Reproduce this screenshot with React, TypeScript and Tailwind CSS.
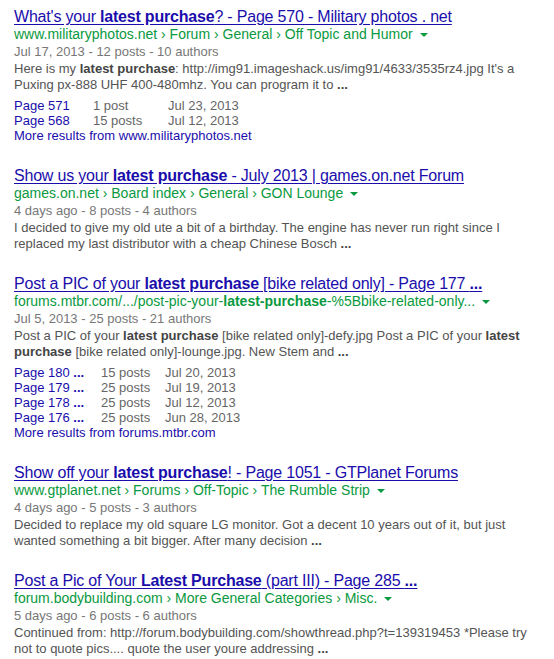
import React from 'react';

type Part = string | { b: string };
type Sitelink = { page: Part[]; posts: string; date: string };

interface Result {
  title: Part[];
  url: Part[];
  meta: string;
  snippet: Part[][];
  sitelinks?: { cols: string; rows: Sitelink[]; more: string };
}

const results: Result[] = [
  {
    title: ["What's your ", { b: 'latest purchase' }, '? - Page 570 - Military photos . net'],
    url: ['www.militaryphotos.net › Forum › General › Off Topic and Humor'],
    meta: 'Jul 17, 2013 - 12 posts - 10 authors',
    snippet: [
      ['Here is my ', { b: 'latest purchase' }, ": http://img91.imageshack.us/img91/4633/3535rz4.jpg It's a"],
      ['Puxing px-888 UHF 400-480mhz. You can program it to ', { b: '...' }],
    ],
    sitelinks: {
      cols: 'grid-cols-[79px_75px_auto]',
      rows: [
        { page: ['Page 571'], posts: '1 post', date: 'Jul 23, 2013' },
        { page: ['Page 568'], posts: '15 posts', date: 'Jul 12, 2013' },
      ],
      more: 'More results from www.militaryphotos.net',
    },
  },
  {
    title: ['Show us your ', { b: 'latest purchase' }, ' - July 2013 | games.on.net Forum'],
    url: ['games.on.net › Board index › General › GON Lounge'],
    meta: '4 days ago - 8 posts - 4 authors',
    snippet: [
      ['I decided to give my old ute a bit of a birthday. The engine has never run right since I'],
      ['replaced my last distributor with a cheap Chinese Bosch ', { b: '...' }],
    ],
  },
  {
    title: ['Post a PIC of your ', { b: 'latest purchase' }, ' [bike related only] - Page 177 ', { b: '...' }],
    url: ['forums.mtbr.com/.../post-pic-your-', { b: 'latest-purchase' }, '-%5Bbike-related-only...'],
    meta: 'Jul 5, 2013 - 25 posts - 21 authors',
    snippet: [
      ['Post a PIC of your ', { b: 'latest purchase' }, ' [bike related only]-defy.jpg Post a PIC of your ', { b: 'latest' }],
      [{ b: 'purchase' }, ' [bike related only]-lounge.jpg. New Stem and ', { b: '...' }],
    ],
    sitelinks: {
      cols: 'grid-cols-[87px_64px_auto]',
      rows: [
        { page: ['Page 180 ', { b: '...' }], posts: '15 posts', date: 'Jul 20, 2013' },
        { page: ['Page 179 ', { b: '...' }], posts: '25 posts', date: 'Jul 19, 2013' },
        { page: ['Page 178 ', { b: '...' }], posts: '25 posts', date: 'Jul 12, 2013' },
        { page: ['Page 176 ', { b: '...' }], posts: '25 posts', date: 'Jun 28, 2013' },
      ],
      more: 'More results from forums.mtbr.com',
    },
  },
  {
    title: ['Show off your ', { b: 'latest purchase' }, '! - Page 1051 - GTPlanet Forums'],
    url: ['www.gtplanet.net › Forums › Off-Topic › The Rumble Strip'],
    meta: '4 days ago - 5 posts - 3 authors',
    snippet: [
      ['Decided to replace my old square LG monitor. Got a decent 10 years out of it, but just'],
      ['wanted something a bit bigger. After many decision ', { b: '...' }],
    ],
  },
  {
    title: ['Post a Pic of Your ', { b: 'Latest Purchase' }, ' (part III) - Page 285 ', { b: '...' }],
    url: ['forum.bodybuilding.com › More General Categories › Misc.'],
    meta: '5 days ago - 6 posts - 6 authors',
    snippet: [
      ['Continued from: http://forum.bodybuilding.com/showthread.php?t=139319453 *Please try'],
      ['not to quote pics.... quote the user youre addressing ', { b: '...' }],
    ],
  },
];

function Text({ parts, boldClass = '' }: { parts: Part[]; boldClass?: string }) {
  return (
    <>
      {parts.map((p, i) =>
        typeof p === 'string' ? <span key={i}>{p}</span> : <b key={i} className={`font-bold ${boldClass}`}>{p.b}</b>
      )}
    </>
  );
}

function ResultItem({ r }: { r: Result }) {
  return (
    <div className="mb-[23px]">
      <h3 className="text-[16px] leading-[18px] tracking-[-0.2px] text-[#1a0dab] underline underline-offset-[2px] whitespace-nowrap">
        <Text parts={r.title} />
      </h3>
      <div className="flex items-center text-[14px] leading-[17px] text-[#0a9940] whitespace-nowrap">
        <span>
          <Text parts={r.url} />
        </span>
        <span className="ml-[7px] mt-[1px] w-0 h-0 border-l-[4px] border-r-[4px] border-t-[4px] border-l-transparent border-r-transparent border-t-[#0a9940]" />
      </div>
      <div className="text-[13px] leading-[18px] text-[#777]">{r.meta}</div>
      <div className="text-[13px] leading-[16px] text-[#545454]">
        {r.snippet.map((line, i) => (
          <div key={i} className="whitespace-nowrap">
            <Text parts={line} boldClass="text-[#444]" />
          </div>
        ))}
      </div>
      {r.sitelinks && (
        <div className="mt-[5px] text-[13px]">
          {r.sitelinks.rows.map((s, i) => (
            <div key={i} className={`grid ${r.sitelinks!.cols} leading-[15px]`}>
              <span className="text-[#1a0dab]">
                <Text parts={s.page} />
              </span>
              <span className="text-[#666]">{s.posts}</span>
              <span className="text-[#666]">{s.date}</span>
            </div>
          ))}
          <div className="leading-[16px] text-[#1a0dab]">{r.sitelinks.more}</div>
        </div>
      )}
    </div>
  );
}

export default function App() {
  return (
    <div className="w-[554px] h-[659px] overflow-hidden bg-white pt-[8px] pl-[14px] font-['Liberation_Sans',Arial,sans-serif]">
      {results.map((r, i) => (
        <ResultItem key={i} r={r} />
      ))}
    </div>
  );
}
